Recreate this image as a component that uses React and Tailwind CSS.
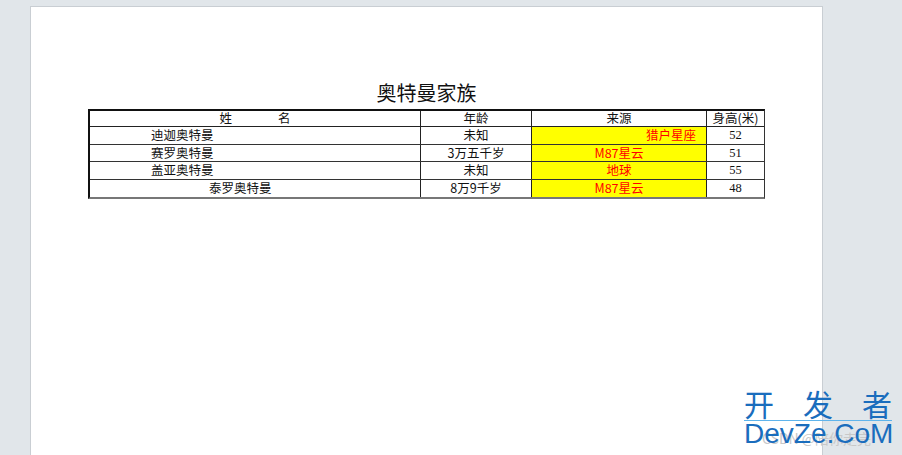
import React from "react";

const rows = [
  { name: "迪迦奥特曼", namePad: "pl-[61px]", age: "未知", src: "猎户星座", srcAlign: "justify-end pr-[10px]", h: "52", rh: "h-[18px]" },
  { name: "赛罗奥特曼", namePad: "pl-[61px]", age: "3万五千岁", src: "M87星云", srcAlign: "justify-center", h: "51", rh: "h-[17px]" },
  { name: "盖亚奥特曼", namePad: "pl-[61px]", age: "未知", src: "地球", srcAlign: "justify-center", h: "55", rh: "h-[18px]" },
  { name: "泰罗奥特曼", namePad: "pl-[119px]", age: "8万9千岁", src: "M87星云", srcAlign: "justify-center", h: "48", rh: "h-[17px]" },
];

export default function App() {
  return (
    <div
      className="relative h-[455px] w-[902px] overflow-hidden bg-[#e1e6ea] pl-[30px] pt-[6px]"
      style={{ fontFamily: '"Noto Sans CJK SC", "Liberation Sans", sans-serif' }}
    >
      <div className="h-[449px] w-[793px] border-l border-t border-r border-[#c9ced3] bg-white">
        <div className="pl-[57px] pt-[70px]">
          <div className="w-[677px] text-center text-[20px] leading-[32px] text-[#111]">奥特曼家族</div>
          <div className="w-[677px] border-l-2 border-t-2 border-r border-b-2 border-l-[#111] border-t-[#111] border-r-[#333] border-b-[#777] text-[12.5px] leading-none text-[#111]">
            <div className="flex h-[16px] border-b border-[#222]">
              <div className="flex w-[331px] items-center justify-center gap-[46px] border-r border-[#222]">
                <span>姓</span>
                <span>名</span>
              </div>
              <div className="flex w-[111px] items-center justify-center border-r border-[#222]">年龄</div>
              <div className="flex w-[175px] items-center justify-center border-r border-[#222]">来源</div>
              <div className="flex flex-1 items-center justify-center">身高(米)</div>
            </div>
            {rows.map((r, i) => (
              <div
                key={i}
                className={`flex ${r.rh} ${i < rows.length - 1 ? "border-b border-[#333]" : ""}`}
              >
                <div className={`flex w-[331px] items-center border-r border-[#222] ${r.namePad}`}>{r.name}</div>
                <div className="flex w-[111px] items-center justify-center border-r border-[#222]">{r.age}</div>
                <div className={`flex w-[175px] items-center border-r border-[#222] bg-[#ffff00] text-[#ff0000] ${r.srcAlign}`}>
                  {r.src}
                </div>
                <div className="flex flex-1 items-center justify-center" style={{ fontFamily: '"Liberation Serif", serif' }}>
                  {r.h}
                </div>
              </div>
            ))}
          </div>
        </div>
      </div>

      <div className="absolute left-[744px] top-[386px] w-[152px]">
        <div className="flex justify-between pr-[4px] text-[30px] leading-[34px] text-[#1a6dbd]">
          <span>开</span>
          <span>发</span>
          <span>者</span>
        </div>
        <div className="h-[1px] w-[148px] bg-[#5fb4ec]"></div>
        <div className="relative">
          <div className="absolute left-[18px] top-[7px] whitespace-nowrap text-[14px] text-[#c8c8c8]">CSDN @陪你走完</div>
          <div
            className="relative text-[28px] leading-[26px] text-[#1a6dbd]"
            style={{ fontFamily: '"Liberation Sans", sans-serif' }}
          >
            DevZe.CoM
          </div>
        </div>
      </div>
    </div>
  );
}
